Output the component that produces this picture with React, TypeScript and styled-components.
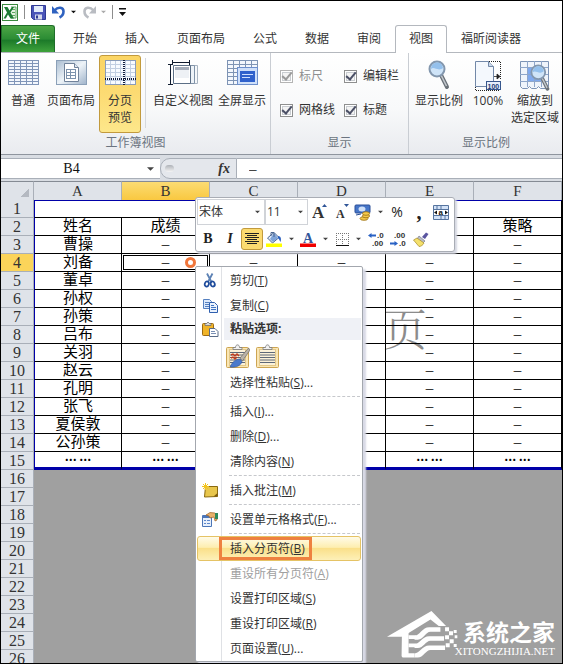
import React from "react";
import styled, { createGlobalStyle, css } from "styled-components";

const ui = `"Open Sans", "Noto Sans CJK SC", sans-serif`;
const sheetFont = `"Liberation Serif", "Noto Sans CJK SC", serif`;
const frame = "#000";
const line = "#a9afb8";

const GlobalStyle = createGlobalStyle`
  * { box-sizing: border-box; }
  body { margin: 0; background: #fff; font: 12px/18px ${ui}; color: #333; }
  button, input, select { font: inherit; color: inherit; margin: 0; }
  button { padding: 0; border: 0; background: none; white-space: nowrap; }
  svg { display: block; flex: none; }
`;

const Window = styled.div`
  position: relative;
  display: flex;
  flex-direction: column;
  height: 100vh;
  border: 1px solid ${frame};
  overflow: hidden;
`;

/* ---------- quick access bar and tabs ---------- */

const QuickBar = styled.header`
  display: flex;
  align-items: center;
  gap: 6px;
  flex: none;
  height: 24px;
  padding: 0 1px 2px;
`;
const QuickButton = styled.button`
  display: flex;
  align-items: center;
  gap: 5px;
`;
const QuickDivider = styled.span`
  width: 1px;
  height: 14px;
  background: #8d8d8d;
`;

const TabBar = styled.nav`
  display: flex;
  flex: none;
  height: 28px;
  border-bottom: 1px solid #b4b8be;
`;
const FileTab = styled.button`
  width: 54px;
  margin-right: 4px;
  border: 1px solid #1f6e2a;
  border-bottom: 0;
  border-radius: 0 3px 0 0;
  background: linear-gradient(#4da545, #2b8c34 50%, #1c7a29 55%, #3fa33c);
  color: #fff;
`;
const Tab = styled.button<{ $active?: boolean }>`
  padding: 0 13px;
  border: 1px solid transparent;
  border-bottom: 0;
  ${(p) =>
    p.$active &&
    css`
      border-color: #b4b8be;
      border-radius: 3px 3px 0 0;
      background: #fff;
      margin-bottom: -1px;
      padding-bottom: 1px;
    `}
`;

/* ---------- ribbon ---------- */

const Ribbon = styled.section`
  display: flex;
  flex: none;
  height: 102px;
  background: linear-gradient(#fff, #f8f9fa 55%, #e9ebef);
  border-bottom: 1px solid #8f959e;
`;
const Group = styled.div<{ $grow?: boolean }>`
  display: flex;
  flex-direction: column;
  flex: ${(p) => (p.$grow ? "1" : "none")};
  border-right: ${(p) => (p.$grow ? "0" : "1px solid #c9cdd3")};
`;
const GroupBody = styled.div`
  display: flex;
  align-items: flex-start;
  gap: 2px;
  height: 80px;
  padding: 2px;
`;
const GroupTitle = styled.div`
  text-align: center;
  line-height: 20px;
  color: #6b7480;
`;
const GroupDivider = styled.span`
  width: 1px;
  height: 70px;
  margin: 3px 4px 0 2px;
  background: #d5d8dd;
`;
const BigButton = styled.button<{ $width: number; $active?: boolean }>`
  display: flex;
  flex-direction: column;
  align-items: center;
  width: ${(p) => p.$width}px;
  height: 78px;
  padding-top: 4px;
  line-height: 17px;
  border: 1px solid ${(p) => (p.$active ? "#c29a3d" : "transparent")};
  border-radius: 3px;
  background: ${(p) => (p.$active ? "linear-gradient(#fbd564, #fcdb73 50%, #fde78b)" : "none")};
  white-space: pre-line;
`;
const BigIcon = styled.span`
  display: flex;
  justify-content: center;
  height: 32px;
`;
const CheckGrid = styled.div`
  display: grid;
  grid-template-columns: 64px 62px;
  row-gap: 16px;
  padding: 12px 0 0 7px;
`;
const CheckLabel = styled.label<{ $dim?: boolean }>`
  display: flex;
  align-items: center;
  gap: 6px;
  color: ${(p) => (p.$dim ? "#8f8f8f" : "#333")};
`;
const CheckBox = styled.input`
  appearance: none;
  display: grid;
  place-items: center;
  width: 13px;
  height: 13px;
  border: 1px solid #8e8f8f;
  background: #f4f4f4;
  box-shadow: inset 0 0 0 1px #fff, inset 0 0 0 2px #c9cdd1;
  &:checked::before {
    content: "";
    width: 4px;
    height: 8px;
    margin-top: -2px;
    border: solid #4b5066;
    border-width: 0 2px 2px 0;
    transform: rotate(40deg);
  }
  &:disabled { border-color: #b4b4b4; }
  &:disabled::before { border-color: #9a9a9a; }
`;

/* ---------- formula bar ---------- */

const FormulaBar = styled.section`
  display: flex;
  flex: none;
  height: 26px;
  padding: 3px 0 2px;
  background: #d9dde3;
`;
const NameBox = styled.div`
  display: flex;
  align-items: center;
  width: 159px;
  padding-right: 6px;
  background: #fff;
  border: solid ${line};
  border-width: 1px 0;
`;
const NameInput = styled.input`
  flex: 1;
  min-width: 0;
  height: 18px;
  padding: 0 5px 0 0;
  border: 0;
  text-align: center;
  background: none;
  font: 14px/18px ${sheetFont};
  color: #111;
`;
const FunctionArea = styled.div`
  display: flex;
  align-items: center;
  justify-content: space-between;
  width: 77px;
  padding: 0 6px 0 4px;
  border: 1px solid ${line};
  border-radius: 10px 0 0 10px;
  background: #e4e7ec;
`;
const Knob = styled.span`
  width: 9px;
  height: 7px;
  border-radius: 4px;
  background: linear-gradient(#aeb2b8, #f4f4f4);
`;
const FxButton = styled.button`
  font: italic bold 14px/16px "Liberation Serif", serif;
  color: #333;
`;
const FormulaInput = styled.input`
  flex: 1;
  min-width: 0;
  padding: 0 12px;
  border: solid ${line};
  border-width: 1px 0;
  background: #fff;
  font: 15px/18px ${sheetFont};
  color: #111;
`;

/* ---------- sheet ---------- */

const Sheet = styled.main`
  position: relative;
  z-index: 0;
  flex: 1;
  min-height: 0;
  background: #fff;
`;
const Grid = styled.table`
  width: 100%;
  table-layout: fixed;
  border-collapse: separate;
  border-spacing: 0;
  font: 15px/17px ${sheetFont};
  color: #000;
  th, td { padding: 0; font-weight: 400; text-align: center; white-space: nowrap; }
`;
const RowHeadCol = styled.col`
  width: 33px;
`;
const ColHead = styled.th<{ $active?: boolean }>`
  height: 19px;
  line-height: 17px;
  border: solid ${line};
  border-width: 1px 1px 0 0;
  border-top-color: #858b94;
  color: #333;
  background: ${(p) => (p.$active ? "linear-gradient(#fbdc73, #f9c840)" : "#dfe3e9")};
`;
const Corner = styled(ColHead)`
  background: linear-gradient(135deg, #dfe3e9 70%, #b4b9c1 70%) 12px 4px / 16px 11px no-repeat #dfe3e9;
`;
const RowHead = styled.th<{ $active?: boolean }>`
  height: 18px;
  font-size: 16px;
  border: solid ${line};
  border-width: 0 1px 1px 0;
  color: #333;
  background: ${(p) => (p.$active ? "#fbd45a" : "#dfe3e9")};
`;
const Cell = styled.td<{ $first?: boolean; $last?: boolean; $selected?: boolean; $dots?: boolean }>`
  position: relative;
  border: solid #000;
  border-width: 0 1px 1px 0;
  ${(p) => p.$first && css`border-left: 1px solid #0000a8;`}
  ${(p) => p.$last && css`border-bottom: 3px solid #0000a8;`}
  ${(p) =>
    p.$dots &&
    css`
      && { font: 900 12px/15px "Noto Sans CJK SC", sans-serif; }
    `}
  ${(p) => p.$selected && css`box-shadow: inset 0 0 0 1px #fff, inset 0 0 0 2px #000;`}
`;
const TitleCell = styled.td`
  border: 1px solid #000;
  border-top-color: #0000a8;
  border-left-color: #0000a8;
`;
const OutsideCell = styled.td`
  background: #a0a0a0;
`;
const ClickMark = styled.span`
  position: absolute;
  top: 3px;
  right: 13px;
  width: 11px;
  height: 11px;
  border: 3px solid #f0763a;
  border-radius: 50%;
  background: #fff;
`;
const PageMark = styled.span`
  position: absolute;
  z-index: -1;
  left: 382px;
  top: 121px;
  font: 300 44px/50px "Noto Serif CJK SC", "Noto Sans CJK SC", serif;
  color: #8c8c8c;
`;

/* ---------- floating mini toolbar ---------- */

const MiniBar = styled.div`
  position: absolute;
  left: 194px;
  top: 196px;
  width: 260px;
  height: 55px;
  padding: 1px;
  border: 1px solid #a9adb5;
  border-radius: 3px;
  background: #fff;
  box-shadow: 2px 2px 2px #d6d8e2;
`;
const MiniRow = styled.div<{ $second?: boolean }>`
  display: grid;
  align-items: center;
  height: ${(p) => (p.$second ? "24px" : "26px")};
  margin-top: ${(p) => (p.$second ? "2px" : "0")};
  grid-template-columns: ${(p) =>
    p.$second ? "22px 22px 24px 30px 38px 31px 23px 22px 23px" : "68px 43px 24px 20px 33px 24px 20px 24px"};
`;
const MiniButton = styled.button<{ $active?: boolean }>`
  display: flex;
  align-items: center;
  justify-content: center;
  gap: 7px;
  height: 22px;
  border-radius: 3px;
  ${(p) => p.$active && css`width: 22px; background: #fcdb70; border: 1px solid #c29a3d;`}
`;
const Glyph = styled.span<{ $size: number; $italic?: boolean; $plain?: boolean }>`
  font: ${(p) => (p.$italic ? "italic" : "normal")} ${(p) => (p.$plain ? 400 : 700)} ${(p) => p.$size}px/20px
    ${(p) => (p.$plain ? ui : `"Liberation Serif", serif`)};
  color: #222;
`;
const Combo = styled.div`
  display: flex;
  align-items: center;
  height: 26px;
  padding-right: 4px;
  border: 1px solid #d0d3d8;
`;
const ComboSelect = styled.select`
  appearance: none;
  flex: 1;
  min-width: 0;
  height: 20px;
  padding: 0 1px;
  border: 0;
  background: none;
`;

/* ---------- context menu ---------- */

const Menu = styled.div`
  position: absolute;
  left: 194px;
  top: 265px;
  width: 168px;
  padding: 1px 1px 0;
  border: 1px solid #a3a7ae;
  border-radius: 2px;
  background: linear-gradient(90deg, #fff 25px, #dfe1e5 25px, #dfe1e5 26px, #fff 26px);
  box-shadow: 3px 3px 2px #d8dae6;
`;
const Item = styled.button<{ $active?: boolean }>`
  display: grid;
  grid-template-columns: 24px auto;
  column-gap: 8px;
  align-items: center;
  justify-items: start;
  width: 100%;
  height: 25px;
  border: 1px solid transparent;
  color: #333;
  &:disabled { color: #a0a0a0; }
  ${(p) =>
    p.$active &&
    css`
      border-color: #e5c365;
      border-radius: 3px;
      background: linear-gradient(#fffbe8, #fdeeb0 45%, #fae08a 50%, #fdf0b8);
    `}
`;
const ItemIcon = styled.span`
  justify-self: center;
`;
const ItemText = styled.span<{ $boxed?: boolean }>`
  position: relative;
  ${(p) =>
    p.$boxed &&
    css`
      &::after {
        content: "";
        position: absolute;
        inset: -3px -7px -2px -11px;
        border: 3px solid #ee8140;
      }
    `}
`;
const PasteHeading = styled.div`
  display: grid;
  grid-template-columns: 26px auto;
  align-items: center;
  height: 22px;
  font-weight: 700;
`;
const PasteTitle = styled.span`
  padding: 2px 6px;
  margin-left: 1px;
  background: #eff1f6;
`;
const PasteRow = styled.div`
  display: flex;
  gap: 6px;
  height: 30px;
  padding: 2px 0 0 29px;
`;
const Separator = styled.hr`
  height: 1px;
  margin: 1px 1px 2px 32px;
  border: 0;
  border-top: 1px dashed #c6c8cc;
`;

/* ---------- site logo ---------- */

const SiteLogo = styled.div`
  position: absolute;
  right: 7px;
  bottom: 5px;
  display: flex;
  align-items: flex-end;
  color: #fff;
`;
const SiteText = styled.div`
  display: flex;
  flex-direction: column;
  align-items: flex-end;
  margin-left: -3px;
`;
const SiteName = styled.strong`
  font: 700 23px/27px "Noto Sans CJK SC", sans-serif;
`;
const SiteUrl = styled.span`
  font: 11px/13px "Liberation Serif", serif;
`;

/* ---------- icons ---------- */

const Caret = ({ color = "#444", size = 7 }: { color?: string; size?: number }) => (
  <svg width={size} height="4" viewBox="0 0 8 4">
    <path d="M0 0h8L4 4z" fill={color} />
  </svg>
);

const ExcelIcon = () => (
  <svg width="16" height="17" viewBox="0 0 16 17">
    <rect x=".5" y=".5" width="15" height="16" fill="#fff" stroke="#3a8a3e" />
    <path d="M9 3h5v11H9" fill="#e4f1e2" stroke="#5fa862" />
    <path d="M10 5.500h3M10 8.500h3M10 11.500h3" stroke="#5fa862" />
    <path d="M2 3h3.500l2 3.500L10 3h2L8.500 8.500l3.500 6H8.500L6 10.500 3.800 14.500H1.500l3.500-6z" fill="#1d7a34" />
  </svg>
);
const SaveIcon = () => (
  <svg width="15" height="15" viewBox="0 0 15 15">
    <path d="M.5.5h14v14h-12l-2-2z" fill="#4a54b8" stroke="#2f3a94" />
    <rect x="3" y="1" width="9" height="6" fill="#e3ecfa" />
    <rect x="4" y="9.500" width="7" height="5" fill="#d5d8ea" />
    <rect x="5" y="10.500" width="2" height="3" fill="#2f3a94" />
  </svg>
);
const UndoIcon = ({ color = "#2f62c0", flip }: { color?: string; flip?: boolean }) => (
  <svg width="14" height="14" viewBox="0 0 14 14">
    <g transform={flip ? "matrix(-1 0 0 1 14 0)" : undefined}>
      <path d="M2.500 5.500C6 1.500 11.500 2 11.500 6.500c0 3-2 5-4 6" fill="none" stroke={color} strokeWidth="2.600" />
      <path d="M0 1v7.500h7z" fill={color} />
    </g>
  </svg>
);
const CustomizeIcon = () => (
  <svg width="7" height="8" viewBox="0 0 7 8">
    <path d="M0 0h7v1.500H0zM0 4h7L3.500 8z" fill="#111" />
  </svg>
);

const cells = (w: number, h: number, dx: number, dy: number) => {
  let d = "";
  for (let x = 0; x <= w; x += dx) d += `M${x}.5 0v${h + 1}`;
  for (let y = 0; y <= h; y += dy) d += `M0 ${y}.5h${w + 1}`;
  return d;
};
const NormalIcon = () => (
  <svg width="31" height="25" viewBox="0 0 31 25" shapeRendering="crispEdges">
    <rect width="31" height="25" fill="#f3f7fd" />
    <path d={cells(30, 24, 6, 3)} stroke="#8095b8" />
  </svg>
);
const PageLayoutIcon = () => (
  <svg width="31" height="25" viewBox="0 0 31 25">
    <defs>
      <linearGradient id="pl" x2="1" y2="1">
        <stop stopColor="#a9bcd0" />
        <stop offset=".5" stopColor="#edf3f8" />
        <stop offset="1" stopColor="#9fb3ca" />
      </linearGradient>
    </defs>
    <rect x=".5" y=".5" width="30" height="24" fill="url(#pl)" stroke="#8ba0b8" />
    <path d="M8.500 3.500h10l4 4v14h-14z" fill="#fff" stroke="#70829a" />
    <path d="M18.500 3.500v4h4" fill="#dde6f0" stroke="#70829a" />
    <path d="M10.500 9.500h9M10.500 12.500h9M10.500 15.500h9M10.500 18.500h9M10.500 9v10M14.500 9v10M19.500 9v10" stroke="#7d93ad" />
  </svg>
);
const PageBreakIcon = () => (
  <svg width="31" height="25" viewBox="0 0 31 25" shapeRendering="crispEdges">
    <rect width="31" height="25" fill="#f8fbff" />
    <path d={cells(30, 24, 5, 4)} stroke="#c2cfe2" />
    <path d="M.5 24.500V.5h30v24z" fill="none" stroke="#8a9cb9" />
    <path d="M18.500 0v25M0 18.500h31" stroke="#111c3c" strokeWidth="2" strokeDasharray="1 1" />
  </svg>
);
const CustomViewIcon = () => (
  <svg width="31" height="26" viewBox="0 0 31 26">
    <path d="M12.500 5.500h17v18h-17z" fill="#f6f8fa" stroke="#a9b5c2" />
    <path d="M9.500 5.500h17v18h-17z" fill="#eef3f8" stroke="#8193a8" />
    <path d="M5.500 5.500h17v18h-17z" fill="#fff" stroke="#5c6f86" />
    <path d="M7 7h14v3H7z" fill="#a5adba" />
    <path d="M7 10h14v8H7z" fill="#eef1f5" />
    <path d="M4 2.500h18M4.500 0v5M21.500 0v5M2.500 4v20M0 4.500h5M0 24.500h5" stroke="#101c30" />
  </svg>
);
const FullScreenIcon = () => (
  <svg width="31" height="26" viewBox="0 0 31 26">
    <rect width="31" height="25" fill="#f3f7fd" />
    <path d={cells(30, 24, 6, 4)} stroke="#7e94b5" shapeRendering="crispEdges" />
    <rect x="10.500" y="7.500" width="20" height="17" fill="#cfe0fa" stroke="#6d8fcc" />
    <rect x="13" y="11" width="15" height="11" fill="#2f61cc" />
    <path d="M15 14.500h11M15 17.500h8" stroke="#cfe0ff" />
  </svg>
);
const MagnifierShape = () => (
  <>
    <path d="M13 15l6 12" stroke="#6a7178" strokeWidth="4" strokeLinecap="round" />
    <path d="M13 15l5.500 11" stroke="#c3c8cd" strokeWidth="1.500" />
    <circle cx="9" cy="9" r="7.500" fill="#cfe4f8" stroke="#8397ae" strokeWidth="2" />
    <path d="M3 9c3-3 7 3 12-1-1-8-12-7-12 1z" fill="#94c0ec" />
  </>
);
const ZoomIcon = () => (
  <svg width="22" height="30" viewBox="0 0 22 30">
    <MagnifierShape />
  </svg>
);
const HundredIcon = () => (
  <svg width="26" height="31" viewBox="0 0 26 31">
    <path d="M.5 1.500h13l5 5v20H.5z" fill="#f4f8fd" stroke="#7288a8" />
    <path d="M13.500 1.500v5h5" fill="#cbd9ea" stroke="#7288a8" />
    <path d="M14 1.500h11.500V20M.5 27v3.500H24" fill="none" stroke="#222" strokeDasharray="1 1" />
    <path d="M19 16.500h5M22 14l3 2.500-3 2.500z" stroke="#222" fill="#222" strokeWidth=".8" />
    <rect x="11.500" y="21.500" width="14" height="8" fill="#e6eefa" stroke="#36568c" />
    <text x="12.500" y="28.500" fontFamily="Liberation Sans" fontWeight="700" fontSize="7" fill="#1c3a75">100</text>
  </svg>
);
const ZoomSelectionIcon = () => (
  <svg width="30" height="31" viewBox="0 0 30 31">
    <path d="M.5 1.500h28v25l-3 2h-5l-2-2-2 2h-5l-2-2-2 2h-5l-2-2z" fill="#eff4fb" stroke="#7c93b5" />
    <path d="M7 7h15v14H7z" fill="#7fa9ee" />
    <path d="M7.500 1v26M14.500 1v26M21.500 1v26M0 7.500h28M0 14.500h28M0 21.500h28" stroke="#8ea6ca" />
    <g transform="translate(10 4) scale(.92)">
      <MagnifierShape />
    </g>
  </svg>
);

const MoneyIcon = () => (
  <svg width="17" height="17" viewBox="0 0 17 17">
    <rect x="1" y="1" width="15" height="8" rx="1" fill="#4676c8" stroke="#2a4f98" />
    <ellipse cx="8" cy="5" rx="3.500" ry="2.500" fill="#cfe0f8" />
    <path d="M2 11l5-1" stroke="#2a4f98" />
    <g fill="#f4c94a" stroke="#9a6f10" strokeWidth=".8">
      <ellipse cx="10" cy="14.500" rx="4" ry="1.800" />
      <ellipse cx="12" cy="12" rx="3.600" ry="1.800" />
      <ellipse cx="12" cy="9.500" rx="3.600" ry="1.800" />
    </g>
  </svg>
);
const MergeIcon = () => (
  <svg width="16" height="15" viewBox="0 0 16 15">
    <path d="M.5.500h15v14H.5zM.5 4.500h15M.5 10.500h15M8 .5v4M8 10.500v4M4 .5v4M12 10.500v4" fill="#d3e2f7" stroke="#56749f" />
    <rect x="1" y="5" width="14" height="5" fill="#fff" />
    <path d="M1 7.500l3-2v4zM15 7.500l-3-2v4z" fill="#111" />
    <text x="5.500" y="10" fontFamily="Liberation Sans" fontWeight="700" fontSize="8" fill="#111">a</text>
  </svg>
);
const CenterIcon = () => (
  <svg width="14" height="12" viewBox="0 0 14 12" shapeRendering="crispEdges">
    <path d="M0 .5h14M2 2.500h10M0 4.500h14M2 6.500h10M0 8.500h14M2 10.500h10" stroke="#222" />
  </svg>
);
const BucketIcon = () => (
  <svg width="16" height="16" viewBox="0 0 16 16">
    <path d="M1.500 7L8 1.500l5 5L6.500 12z" fill="#dfe9f6" stroke="#4a658f" />
    <path d="M4 8l4-6 4 5-5 4z" fill="#7fa4d8" />
    <path d="M5 5V1.500h3V6" fill="none" stroke="#4a658f" />
    <path d="M12 5c3 0 3.500 3 2.500 6-1-1-1-3-2.500-4z" fill="#2a5fbd" />
    <rect y="12.500" width="16" height="3.500" fill="#ffff00" />
  </svg>
);
const FontColorIcon = () => (
  <svg width="16" height="16" viewBox="0 0 16 16">
    <text x="3" y="11.500" fontFamily="Liberation Serif" fontWeight="700" fontSize="14" fill="#32569b">A</text>
    <rect y="12.500" width="16" height="3.500" fill="#f00000" />
  </svg>
);
const BorderIcon = () => (
  <svg width="13" height="13" viewBox="0 0 13 13" shapeRendering="crispEdges">
    <path d="M0 .5h13M0 6.500h13M.5 0v12M6.500 0v12M12.500 0v12" stroke="#777" strokeDasharray="1 1" />
    <path d="M0 12.500h13" stroke="#111" />
  </svg>
);
const GrowFontIcon = () => (
  <svg width="16" height="20" viewBox="0 0 16 20">
    <text x="0" y="16" fontFamily="Liberation Serif" fontWeight="700" fontSize="17" fill="#333">A</text>
    <path d="M10 5l2.500-3L15 5z" fill="#2f5597" />
  </svg>
);
const ShrinkFontIcon = () => (
  <svg width="14" height="20" viewBox="0 0 14 20">
    <text x="1" y="16" fontFamily="Liberation Serif" fontWeight="700" fontSize="12" fill="#333">A</text>
    <path d="M9 2h5l-2.500 3z" fill="#2f5597" />
  </svg>
);
const DecimalIcon = ({ more }: { more?: boolean }) => (
  <svg width="16" height="15" viewBox="0 0 16 15">
    <g fontFamily="Liberation Sans" fontWeight="700" fontSize="8" fill="#333">
      <text x={more ? 9 : 4} y="6">{more ? ".0" : ".00"}</text>
      <text x={more ? 4 : 9} y="14">{more ? ".00" : ".0"}</text>
    </g>
    <path
      d={more ? "M0 3.500L3.500 1v1.500H8v2H3.500V6z" : "M8 11.500L4.500 9v1.500H0v2h4.500V14z"}
      fill="#2a62c4"
    />
  </svg>
);
const BrushIcon = () => (
  <svg width="16" height="15" viewBox="0 0 16 15">
    <path d="M9 5l4-4.500L15.500 2 12 7z" fill="#5a55a0" />
    <path d="M6 4l6 5-2 2-6-4z" fill="#b9bdc8" stroke="#6c6f80" strokeWidth=".6" />
    <path d="M4 6L11 11c-1 2-3 3.500-5 3.500L.5 8z" fill="#f4e06c" stroke="#a58a28" strokeWidth=".7" />
  </svg>
);

const CutIcon = () => (
  <svg width="14" height="15" viewBox="0 0 14 15">
    <path d="M4 .5L8.500 9M9.500.5L5 9" stroke="#5d82b5" strokeWidth="1.800" />
    <g fill="none" stroke="#1f4c9c" strokeWidth="1.800">
      <ellipse cx="3.800" cy="11" rx="2" ry="2.600" transform="rotate(20 3.800 11)" />
      <ellipse cx="9.700" cy="11" rx="2" ry="2.600" transform="rotate(-20 9.700 11)" />
    </g>
  </svg>
);
const CopyIcon = () => (
  <svg width="15" height="14" viewBox="0 0 15 14">
    <path d="M.5.5h6l2 2v7h-8z" fill="#dce9fb" stroke="#5580c0" />
    <path d="M2 3.500h4M2 5.500h5M2 7.500h4" stroke="#5580c0" />
    <path d="M6.500 3.500h5l3 3v7h-8z" fill="#eaf2fd" stroke="#2f5fae" />
    <path d="M8 6.500h3M8 8.500h5M8 10.500h5" stroke="#3f74c4" />
  </svg>
);
const PasteIcon = () => (
  <svg width="17" height="15" viewBox="0 0 17 15">
    <rect x=".5" y="1.500" width="11" height="12" rx="1" fill="#f0b429" stroke="#9c6a12" />
    <path d="M3 3.500V1.500h1.500L6 0l1.500 1.500H9v2z" fill="#d8d8d8" stroke="#666" strokeWidth=".7" />
    <path d="M7.500 6.500h5.500l3 3v5H7.500z" fill="#fff" stroke="#5a6c88" />
    <path d="M9 9.500h4M9 11.500h5" stroke="#7a90b5" />
  </svg>
);
const ClipboardIcon = ({ brush }: { brush?: boolean }) => (
  <svg width="24" height="25" viewBox="0 0 24 25">
    <rect x=".5" y="3.500" width="22" height="20" rx="1" fill="#fae6b4" stroke="#cda552" />
    <rect x="3.500" y="5.500" width="16" height="16" fill="#fbf1d8" stroke="#e3c98a" />
    <path d="M7 5.500V3.500h2.500C9.500 0 13.500 0 13.500 3.500H16v2z" fill="#f1f1f1" stroke="#777" strokeWidth=".8" />
    <path d="M4 8.500h15M4 11h15M4 13.500h15M4 16h15M4 18.500h15" stroke="#5e6878" />
    {brush && (
      <>
        <path d="M5 11l2-1 2 2 2-2 2 2M5 14l2-1 2 2 2-2" fill="none" stroke="#c23a1c" strokeWidth="1.400" />
        <path d="M14 14L22.500 4 24 6l-7.500 11z" fill="#b9b2a8" stroke="#6f6a62" strokeWidth=".7" />
        <path d="M4 23c2-5 6-8 10-8l2 2.500c-1 4-6 6.500-12 5.500z" fill="#4a79cc" stroke="#2a4f98" strokeWidth=".6" />
      </>
    )}
  </svg>
);
const CommentIcon = () => (
  <svg width="16" height="15" viewBox="0 0 16 15">
    <path d="M3.500 3.500h12v10l-13 .5z" fill="#e8c64c" stroke="#8a6a10" />
    <path d="M15.500 10v3.500h-4z" fill="#7c5b0c" />
    <path d="M3.500 0v7M0 3.500h7M1 1l5 5M6 1L1 6" stroke="#f3c41e" />
  </svg>
);
const FormatIcon = () => (
  <svg width="16" height="15" viewBox="0 0 16 15">
    <path d="M.5 3.500h9v11h-9z" fill="#e8f0fc" stroke="#4c76b8" />
    <path d="M1 5h8" stroke="#4c76b8" strokeWidth="2" />
    <path d="M2 8.500h2M2 11.500h2M5 8.500h3M5 11.500h3" stroke="#5d88cc" />
    <path d="M4 3l4-2.500 5 .5 2 2v5l-2 1-1-4-4 1-1-2z" fill="#e9b06a" stroke="#9c6428" strokeWidth=".7" />
    <path d="M13 1h3v6h-3z" fill="#2f8a5c" />
  </svg>
);
const HouseLogo = () => (
  <svg width="71" height="47" viewBox="21 505 214 141">
    <g fill="#fff">
      <path d="M21 582L155 505l44 45h-22l-25-20-72 45-15 7z" />
      <path d="M66 572l20-12v72h18v13H72c-5 0-8-3-7-8z" />
      <path d="M86 578h24v11H86zM86 603h24v11H86z" />
      <path d="M104 580c14 0 24-26 44-26h34v13h-30c-14 0-22 24-38 24h-10z" />
      <path d="M104 605c14 0 24-24 44-24h45v13h-41c-14 0-22 22-38 22h-10z" />
      <path d="M104 633c14 0 24-24 44-24h48v13h-44c-14 0-22 23-38 23h-10z" />
      <path d="M196 554h12v12h-12zM208 566h12v12h-12zM222 562h9v9h-9zM196 578h12v12h-12zM210 590h12v12h-12zM225 578h8v9h-8zM198 602h12v12h-12zM222 604h9v9h-9z" />
    </g>
  </svg>
);

/* ---------- data ---------- */

const tabs = ["开始", "插入", "页面布局", "公式", "数据", "审阅", "视图", "福昕阅读器"];
const names = ["曹操", "刘备", "董卓", "孙权", "孙策", "吕布", "关羽", "赵云", "孔明", "张飞", "夏侯敦", "公孙策"];
const columns = ["A", "B", "C", "D", "E", "F"];
const rows: string[][] = [
  ["姓名", "成绩", "", "", "", "策略"],
  ...names.map((n) => [n, "–", "–", "–", "–", "–"]),
  columns.map(() => "… …"),
];
const outside = Array.from({ length: 11 }, (_, i) => 16 + i);

type Entry = { text: string; hotkey: string; more?: boolean; icon?: React.ReactNode; disabled?: boolean; active?: boolean };

const MenuEntry = ({ text, hotkey, more, icon, disabled, active }: Entry) => (
  <Item role="menuitem" disabled={disabled} $active={active}>
    <ItemIcon>{icon}</ItemIcon>
    <ItemText $boxed={active}>
      {text}(<u>{hotkey}</u>){more && "..."}
    </ItemText>
  </Item>
);

const RibbonButton = (p: { width: number; label: string; icon: React.ReactNode; active?: boolean }) => (
  <BigButton $width={p.width} $active={p.active}>
    <BigIcon>{p.icon}</BigIcon>
    {p.label}
  </BigButton>
);

const Check = ({ label, disabled }: { label: string; disabled?: boolean }) => (
  <CheckLabel $dim={disabled}>
    <CheckBox type="checkbox" defaultChecked disabled={disabled} />
    {label}
  </CheckLabel>
);

export default function App() {
  return (
    <Window lang="zh-CN">
      <GlobalStyle />
      <QuickBar>
        <ExcelIcon />
        <QuickDivider />
        <QuickButton aria-label="保存"><SaveIcon /></QuickButton>
        <QuickButton aria-label="撤消"><UndoIcon /><Caret color="#111" size={5} /></QuickButton>
        <QuickButton aria-label="恢复"><UndoIcon color="#b9bcc2" flip /><Caret color="#aaa" size={5} /></QuickButton>
        <QuickDivider />
        <QuickButton aria-label="自定义"><CustomizeIcon /></QuickButton>
      </QuickBar>

      <TabBar>
        <FileTab>文件</FileTab>
        {tabs.map((t) => (
          <Tab key={t} $active={t === "视图"}>{t}</Tab>
        ))}
      </TabBar>

      <Ribbon>
        <Group>
          <GroupBody>
            <RibbonButton width={40} label="普通" icon={<NormalIcon />} />
            <RibbonButton width={52} label="页面布局" icon={<PageLayoutIcon />} />
            <RibbonButton width={42} label={"分页\n预览"} icon={<PageBreakIcon />} active />
            <GroupDivider />
            <RibbonButton width={62} label="自定义视图" icon={<CustomViewIcon />} />
            <RibbonButton width={52} label="全屏显示" icon={<FullScreenIcon />} />
          </GroupBody>
          <GroupTitle>工作簿视图</GroupTitle>
        </Group>
        <Group>
          <GroupBody>
            <CheckGrid>
              <Check label="标尺" disabled />
              <Check label="编辑栏" />
              <Check label="网格线" />
              <Check label="标题" />
            </CheckGrid>
          </GroupBody>
          <GroupTitle>显示</GroupTitle>
        </Group>
        <Group $grow>
          <GroupBody>
            <RibbonButton width={56} label="显示比例" icon={<ZoomIcon />} />
            <RibbonButton width={38} label="100%" icon={<HundredIcon />} />
            <RibbonButton width={52} label={"缩放到\n选定区域"} icon={<ZoomSelectionIcon />} />
          </GroupBody>
          <GroupTitle>显示比例</GroupTitle>
        </Group>
      </Ribbon>

      <FormulaBar>
        <NameBox>
          <NameInput aria-label="名称框" defaultValue="B4" />
          <Caret />
        </NameBox>
        <FunctionArea>
          <Knob />
          <FxButton aria-label="插入函数">fx</FxButton>
        </FunctionArea>
        <FormulaInput aria-label="编辑栏" defaultValue="–" />
      </FormulaBar>

      <Sheet>
        <PageMark>页</PageMark>
        <Grid>
          <colgroup>
            <RowHeadCol />
            {columns.map((c) => <col key={c} />)}
          </colgroup>
          <thead>
            <tr>
              <Corner />
              {columns.map((c) => <ColHead key={c} scope="col" $active={c === "B"}>{c}</ColHead>)}
            </tr>
          </thead>
          <tbody>
            <tr>
              <RowHead scope="row">1</RowHead>
              <TitleCell colSpan={6} />
            </tr>
            {rows.map((row, r) => (
              <tr key={r}>
                <RowHead scope="row" $active={r === 2}>{r + 2}</RowHead>
                {row.map((value, c) => (
                  <Cell
                    key={c}
                    $first={c === 0}
                    $last={r === rows.length - 1}
                    $dots={r === rows.length - 1}
                    $selected={r === 2 && c === 1}
                  >
                    {value}
                    {r === 2 && c === 1 && <ClickMark />}
                  </Cell>
                ))}
              </tr>
            ))}
            {outside.map((n) => (
              <tr key={n}>
                <RowHead scope="row">{n}</RowHead>
                <OutsideCell colSpan={6} />
              </tr>
            ))}
          </tbody>
        </Grid>
      </Sheet>

      <SiteLogo>
        <HouseLogo />
        <SiteText>
          <SiteName>系统之家</SiteName>
          <SiteUrl>XITONGZHIJIA.NET</SiteUrl>
        </SiteText>
      </SiteLogo>

      <MiniBar>
        <MiniRow>
          <Combo>
            <ComboSelect aria-label="字体"><option>宋体</option></ComboSelect>
            <Caret size={5} />
          </Combo>
          <Combo>
            <ComboSelect aria-label="字号"><option>11</option></ComboSelect>
            <Caret size={5} />
          </Combo>
          <MiniButton aria-label="增大字号"><GrowFontIcon /></MiniButton>
          <MiniButton aria-label="减小字号"><ShrinkFontIcon /></MiniButton>
          <MiniButton aria-label="会计数字格式"><MoneyIcon /><Caret size={5} /></MiniButton>
          <MiniButton aria-label="百分比样式"><Glyph $size={14} $plain>%</Glyph></MiniButton>
          <MiniButton aria-label="千位分隔样式"><Glyph $size={20}>,</Glyph></MiniButton>
          <MiniButton aria-label="合并后居中"><MergeIcon /></MiniButton>
        </MiniRow>
        <MiniRow $second>
          <MiniButton aria-label="加粗"><Glyph $size={14}>B</Glyph></MiniButton>
          <MiniButton aria-label="倾斜"><Glyph $size={14} $italic>I</Glyph></MiniButton>
          <MiniButton aria-label="居中" $active><CenterIcon /></MiniButton>
          <MiniButton aria-label="填充颜色"><BucketIcon /><Caret size={5} /></MiniButton>
          <MiniButton aria-label="字体颜色"><FontColorIcon /><Caret size={5} /></MiniButton>
          <MiniButton aria-label="边框"><BorderIcon /><Caret size={5} /></MiniButton>
          <MiniButton aria-label="增加小数位数"><DecimalIcon more /></MiniButton>
          <MiniButton aria-label="减少小数位数"><DecimalIcon /></MiniButton>
          <MiniButton aria-label="格式刷"><BrushIcon /></MiniButton>
        </MiniRow>
      </MiniBar>

      <Menu role="menu">
        <MenuEntry text="剪切" hotkey="T" icon={<CutIcon />} />
        <MenuEntry text="复制" hotkey="C" icon={<CopyIcon />} />
        <PasteHeading>
          <ItemIcon><PasteIcon /></ItemIcon>
          <PasteTitle>粘贴选项:</PasteTitle>
        </PasteHeading>
        <PasteRow>
          <button aria-label="粘贴"><ClipboardIcon brush /></button>
          <button aria-label="仅粘贴值"><ClipboardIcon /></button>
        </PasteRow>
        <MenuEntry text="选择性粘贴" hotkey="S" more />
        <Separator />
        <MenuEntry text="插入" hotkey="I" more />
        <MenuEntry text="删除" hotkey="D" more />
        <MenuEntry text="清除内容" hotkey="N" />
        <Separator />
        <MenuEntry text="插入批注" hotkey="M" icon={<CommentIcon />} />
        <Separator />
        <MenuEntry text="设置单元格格式" hotkey="F" more icon={<FormatIcon />} />
        <Separator />
        <MenuEntry text="插入分页符" hotkey="B" active />
        <MenuEntry text="重设所有分页符" hotkey="A" disabled />
        <MenuEntry text="设置打印区域" hotkey="S" />
        <MenuEntry text="重设打印区域" hotkey="R" />
        <MenuEntry text="页面设置" hotkey="U" more />
      </Menu>
    </Window>
  );
}
